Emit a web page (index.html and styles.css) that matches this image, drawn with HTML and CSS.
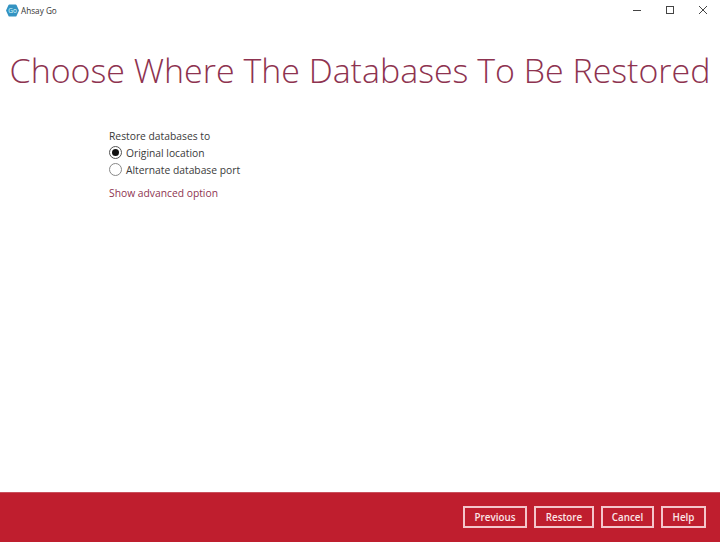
FILE: index.html
```html
<!DOCTYPE html>
<html lang="en">
<head>
<meta charset="utf-8">
<title>Ahsay Go</title>
<link rel="stylesheet" href="styles.css">
</head>
<body>
<div class="window">
  <header class="titlebar">
    <div class="app">
      <svg class="logo" width="13" height="13" viewBox="0 0 12 12"><path d="M3.200.5h5.600a1 1 0 0 1 .9.5l2 4.400a1 1 0 0 1 0 1.200l-2 4.400a1 1 0 0 1-.9.5H3.200a1 1 0 0 1-.9-.5L.3 6.600a1 1 0 0 1 0-1.200L2.300 1a1 1 0 0 1 .9-.5z" fill="#3493c2"/><text x="6" y="8" text-anchor="middle" class="logo-text">Go</text></svg>
      <span class="app-name">Ahsay Go</span>
    </div>
    <div class="controls">
      <svg width="10" height="10" viewBox="0 0 10 10"><path d="M1 5.500h8" stroke="#444" fill="none"/></svg>
      <svg width="10" height="10" viewBox="0 0 10 10"><rect x="1.500" y="1.500" width="7" height="7" stroke="#444" fill="none"/></svg>
      <svg width="10" height="10" viewBox="0 0 10 10"><path d="M1 1l8 8M9 1l-8 8" stroke="#444" fill="none"/></svg>
    </div>
  </header>
  <h1 class="heading">Choose Where The Databases To Be Restored</h1>
  <main class="content">
    <div class="label">Restore databases to</div>
    <label class="radio-row"><span class="radio checked"></span>Original location</label>
    <label class="radio-row"><span class="radio"></span>Alternate database port</label>
    <a class="advanced">Show advanced option</a>
  </main>
  <footer class="footer">
    <button class="btn btn-previous">Previous</button>
    <button class="btn btn-restore">Restore</button>
    <button class="btn btn-cancel">Cancel</button>
    <button class="btn btn-help">Help</button>
  </footer>
</div>
</body>
</html>
```
FILE: styles.css
```css
* { box-sizing: border-box; }
html, body { margin: 0; height: 100%; }
body { font-family: "Open Sans", "Liberation Sans", sans-serif; background: #fff; color: #3a3a3a; }
.window { width: 720px; height: 542px; display: flex; flex-direction: column; overflow: hidden; }
.titlebar { height: 22px; flex: none; display: flex; justify-content: space-between; align-items: center; padding: 0 12px 2px 6px; }
.app { display: flex; align-items: center; gap: 2px; }
.logo-text { font-size: 6px; fill: #dff; font-family: "Open Sans", sans-serif; }
.app-name { font-size: 8.2px; color: #333; }
.controls { display: flex; gap: 23px; }
.heading { margin: 20px 0 0; height: 57px; font-size: 33.95px; line-height: 57px; font-weight: 300; color: #8e3350; text-align: center; white-space: nowrap; }
.content { flex: 1; padding: 29px 0 0 109px; font-size: 10.3px; }
.label { height: 16px; line-height: 16px; }
.radio-row { display: flex; align-items: center; gap: 4px; height: 17px; }
.radio { width: 13px; height: 13px; border-radius: 50%; border: 1px solid #888; display: flex; align-items: center; justify-content: center; }
.radio.checked { border-color: #555; }
.radio.checked::after { content: ""; width: 7px; height: 7px; border-radius: 50%; background: #111; }
.advanced { display: block; margin-top: 7px; color: #8e3350; line-height: 16px; }
.footer { height: 50px; flex: none; background: #bf1e2e; display: flex; justify-content: flex-end; align-items: center; gap: 7px; padding: 0 14px 2px 0; border-top: 1px solid #c9505c; }
.btn { height: 22px; background: transparent; border: 2px solid #f4c6cb; color: #fbe6e8; font: 600 9.8px "Open Sans", sans-serif; padding: 1px 0 0; }
.btn-previous { width: 64px; }
.btn-restore { width: 60px; }
.btn-cancel { width: 53px; }
.btn-help { width: 45px; }
```
